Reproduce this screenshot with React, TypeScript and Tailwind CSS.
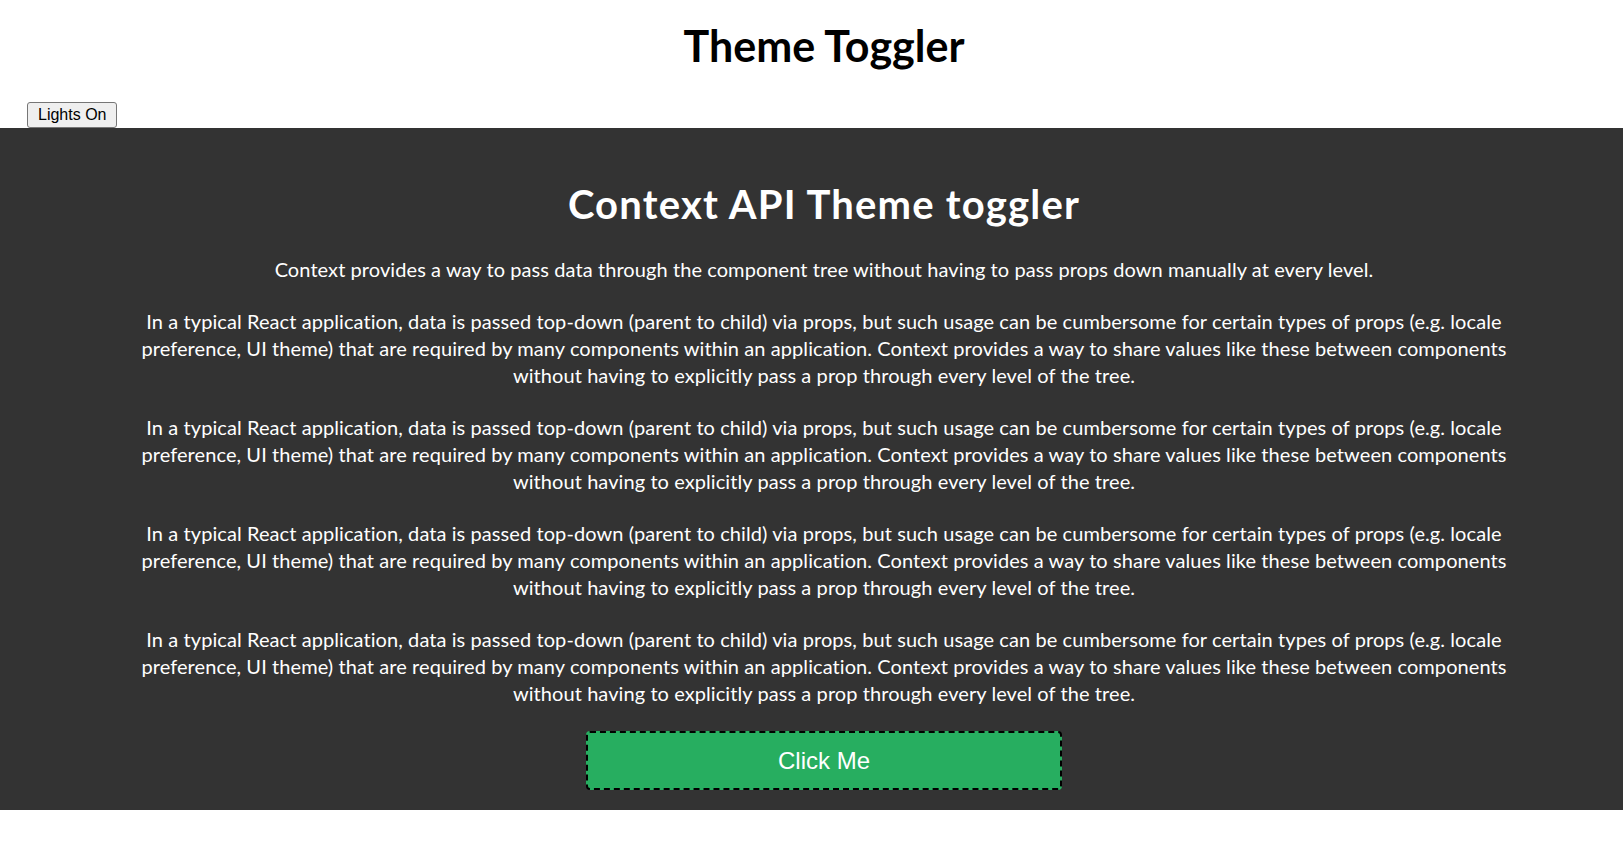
import React, { useState } from 'react';

const LINES = [
  'In a typical React application, data is passed top-down (parent to child) via props, but such usage can be cumbersome for certain types of props (e.g. locale',
  'preference, UI theme) that are required by many components within an application. Context provides a way to share values like these between components',
  'without having to explicitly pass a prop through every level of the tree.',
];

const App: React.FC = () => {
  const [dark, setDark] = useState(true);

  return (
    <div className="min-h-screen bg-white font-['Lato',sans-serif]">
      <header className="pl-[25px] pt-[18px]">
        <h1 className="text-center text-[43px] leading-[56px] font-bold text-black">Theme Toggler</h1>
      </header>

      <div className="pl-[27px] mt-[28px] flex">
        <button
          onClick={() => setDark(!dark)}
          className="h-[26px] px-[10px] bg-[#efefef] border border-[#767676] rounded-[3px] text-[16px] leading-[20px] text-black font-['Liberation_Sans',sans-serif]"
        >
          {dark ? 'Lights On' : 'Lights Off'}
        </button>
      </div>

      <main className={`${dark ? 'bg-[#333333] text-white' : 'bg-white text-black'} pl-[25px] pt-[52px] pb-[20px] flex flex-col items-center`}>
        <h2 className="text-[40px] leading-[48px] font-bold tracking-[1.2px]">Context API Theme toggler</h2>

        <p className="mt-[28px] text-[20px] leading-[27px] text-center whitespace-nowrap tracking-[0.08px]">
          Context provides a way to pass data through the component tree without having to pass props down manually at every level.
        </p>

        {[0, 1, 2, 3].map((i) => (
          <p key={i} className="mt-[25px] text-[20px] leading-[27px] text-center whitespace-nowrap tracking-[0.08px]">
            {LINES.map((line, j) => (
              <React.Fragment key={j}>
                {line}
                {j < LINES.length - 1 && <br />}
              </React.Fragment>
            ))}
          </p>
        ))}

        <button className="mt-[24px] w-[476px] h-[59px] bg-[#27ae60] border-2 border-dashed border-black rounded-[4px] text-white text-[24px] font-['Liberation_Sans',sans-serif]">
          Click Me
        </button>
      </main>
    </div>
  );
};

export default App;
